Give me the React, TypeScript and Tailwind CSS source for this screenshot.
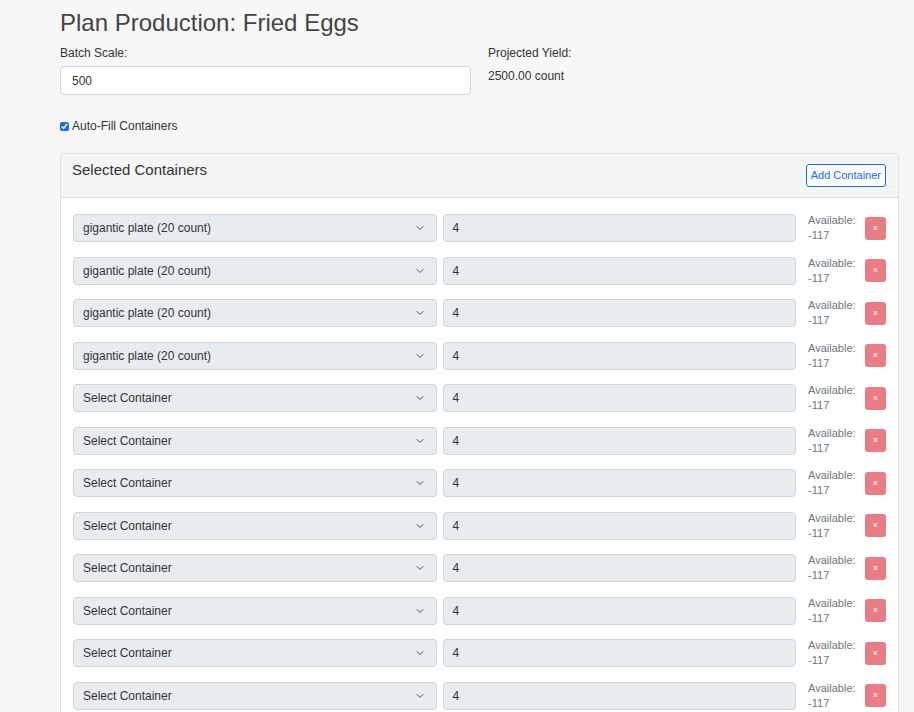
import { ChevronDown } from "lucide-react";

const rows = [
  "gigantic plate (20 count)",
  "gigantic plate (20 count)",
  "gigantic plate (20 count)",
  "gigantic plate (20 count)",
  "Select Container",
  "Select Container",
  "Select Container",
  "Select Container",
  "Select Container",
  "Select Container",
  "Select Container",
  "Select Container",
];

export default function App() {
  return (
    <div
      className="min-h-screen bg-[#f7f7f7] text-[#333] pl-[60px] pr-[15px]"
      style={{ fontFamily: '"Liberation Sans", Arial, sans-serif' }}
    >
      <h1 className="pt-[7px] text-[24px] leading-[32px] text-[#444]">Plan Production: Fried Eggs</h1>

      <div className="flex mt-[7px]">
        <div className="w-[411px]">
          <div className="text-[12px] leading-[15px]">Batch Scale:</div>
          <div className="mt-[5px] h-[29px] bg-white border border-[#ced4da] rounded-[4px] flex items-center px-[11px] text-[12px]">
            500
          </div>
        </div>
        <div className="ml-[17px]">
          <div className="text-[12px] leading-[15px]">Projected Yield:</div>
          <div className="mt-[8px] text-[12px] leading-[15px]">2500.00 count</div>
        </div>
      </div>

      <label className="flex items-center mt-[24px] text-[12px] leading-[15px]">
        <input type="checkbox" defaultChecked className="w-[9px] h-[9px] mr-[3px] accent-[#0d6efd]" />
        Auto-Fill Containers
      </label>

      <div className="mt-[19px] border border-[#dfdfdf] rounded-[4px] bg-white overflow-hidden">
        <div className="bg-[#f5f5f5] border-b border-[#dfdfdf] h-[44px] flex justify-between pl-[11px] pr-[12px]">
          <div className="pt-[7px] text-[15px] leading-[18px]">Selected Containers</div>
          <button className="mt-[10px] h-[23px] px-[4px] border border-[#0d6efd] rounded-[3px] text-[#0d6efd] text-[11px] bg-white">
            Add Container
          </button>
        </div>
        <div className="pt-[16px] pl-[12px] pr-[12px]">
          {rows.map((r, i) => (
            <div key={i} className="flex items-center h-[28px] mb-[14.5px]">
              <div className="w-[364px] h-[28px] bg-[#e9ecef] border border-[#ced4da] rounded-[4px] flex items-center justify-between pl-[9px] pr-[10px] text-[12px]">
                <span>{r}</span>
                <ChevronDown className="w-[12px] h-[12px] text-[#555]" strokeWidth={2} />
              </div>
              <div className="ml-[6px] w-[354px] h-[28px] bg-[#e9ecef] border border-[#ced4da] rounded-[4px] flex items-center pl-[9px] text-[12px]">
                4
              </div>
              <div className="ml-[12px] w-[56px] text-[11px] leading-[15px] text-[#6c757d]">
                Available:
                <br />
                -117
              </div>
              <button className="ml-[1px] w-[21px] h-[23px] rounded-[3px] bg-[#e87d86] text-white text-[9px] leading-none flex items-center justify-center">
                ×
              </button>
            </div>
          ))}
        </div>
      </div>
    </div>
  );
}
